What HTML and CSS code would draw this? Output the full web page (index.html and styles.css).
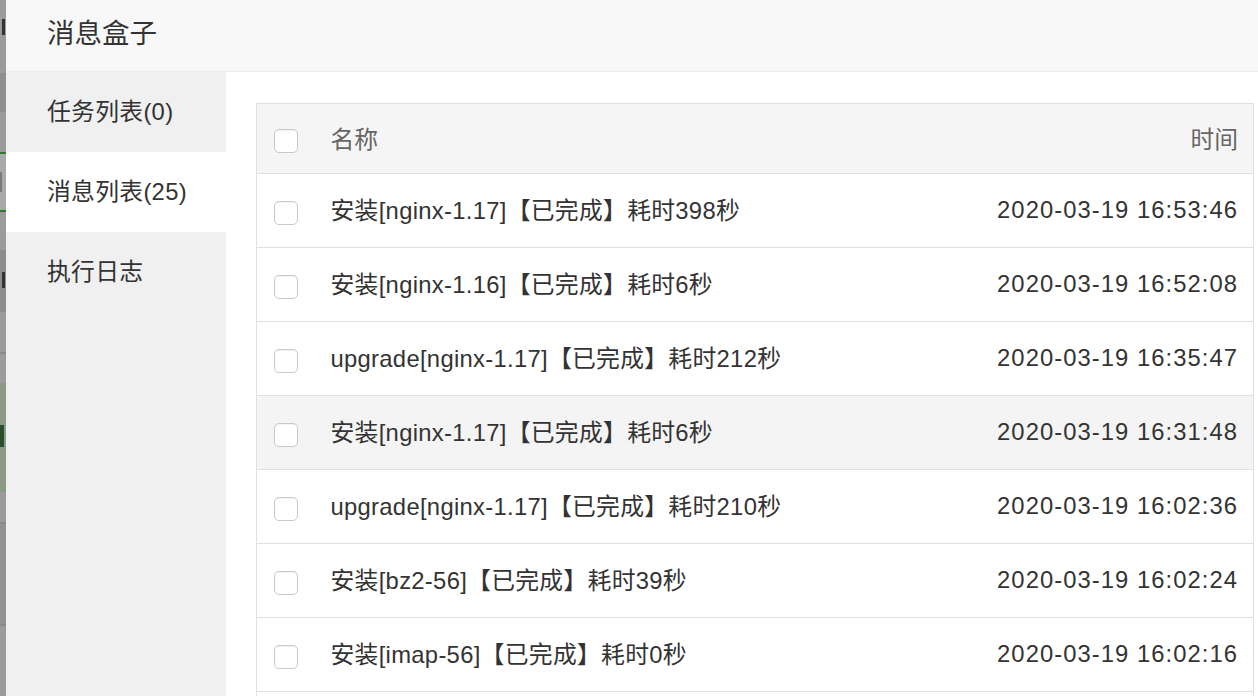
FILE: index.html
```html
<!DOCTYPE html>
<html lang="zh-CN">
<head>
<meta charset="utf-8">
<title>消息盒子</title>
<link rel="stylesheet" href="styles.css">
</head>
<body>
<div class="page">
  <div class="backdrop">
    <div class="bd bd-a"><span class="mark"></span></div>
    <div class="bd bd-b"></div>
    <div class="bd bd-c"></div>
    <div class="bd bd-line"></div>
    <div class="bd bd-d"><span class="mark light"></span></div>
    <div class="bd bd-line"></div>
    <div class="bd bd-e"></div>
    <div class="bd bd-f"><span class="mark"></span></div>
    <div class="bd bd-g"></div>
    <div class="bd bd-sep"></div>
    <div class="bd bd-h"></div>
    <div class="bd bd-green"><span class="mark green"></span></div>
    <div class="bd bd-i"></div>
    <div class="bd bd-sep"></div>
    <div class="bd bd-j"></div>
    <div class="bd bd-sep"></div>
    <div class="bd bd-k"></div>
  </div>
  <div class="modal">
    <div class="modal-header">消息盒子</div>
    <div class="modal-body">
      <ul class="side-menu">
        <li class="menu-item">任务列表(0)</li>
        <li class="menu-item active">消息列表(25)</li>
        <li class="menu-item">执行日志</li>
      </ul>
      <div class="content">
        <table class="msg-table">
          <thead>
            <tr>
              <th class="col-check"><input type="checkbox" class="cb"></th>
              <th class="col-name">名称</th>
              <th class="col-time">时间</th>
            </tr>
          </thead>
          <tbody>
            <tr>
              <td class="col-check"><input type="checkbox" class="cb"></td>
              <td class="col-name">安装[nginx-1.17]【已完成】耗时398秒</td>
              <td class="col-time">2020-03-19 16:53:46</td>
            </tr>
            <tr>
              <td class="col-check"><input type="checkbox" class="cb"></td>
              <td class="col-name">安装[nginx-1.16]【已完成】耗时6秒</td>
              <td class="col-time">2020-03-19 16:52:08</td>
            </tr>
            <tr>
              <td class="col-check"><input type="checkbox" class="cb"></td>
              <td class="col-name">upgrade[nginx-1.17]【已完成】耗时212秒</td>
              <td class="col-time">2020-03-19 16:35:47</td>
            </tr>
            <tr class="hover">
              <td class="col-check"><input type="checkbox" class="cb"></td>
              <td class="col-name">安装[nginx-1.17]【已完成】耗时6秒</td>
              <td class="col-time">2020-03-19 16:31:48</td>
            </tr>
            <tr>
              <td class="col-check"><input type="checkbox" class="cb"></td>
              <td class="col-name">upgrade[nginx-1.17]【已完成】耗时210秒</td>
              <td class="col-time">2020-03-19 16:02:36</td>
            </tr>
            <tr>
              <td class="col-check"><input type="checkbox" class="cb"></td>
              <td class="col-name">安装[bz2-56]【已完成】耗时39秒</td>
              <td class="col-time">2020-03-19 16:02:24</td>
            </tr>
            <tr>
              <td class="col-check"><input type="checkbox" class="cb"></td>
              <td class="col-name">安装[imap-56]【已完成】耗时0秒</td>
              <td class="col-time">2020-03-19 16:02:16</td>
            </tr>
            <tr class="next-row">
              <td class="col-check"></td>
              <td class="col-name"></td>
              <td class="col-time"></td>
            </tr>
          </tbody>
        </table>
      </div>
    </div>
  </div>
</div>
</body>
</html>
```

FILE: styles.css
```css
* {
  box-sizing: border-box;
}

html, body {
  margin: 0;
  padding: 0;
  height: 100%;
  overflow: hidden;
}

body {
  font-family: "Liberation Sans", "Noto Sans CJK SC", sans-serif;
  color: #333;
  background: #999;
}

.page {
  display: flex;
  height: 696px;
  width: 1258px;
  overflow: hidden;
}

/* dimmed page visible at the left edge */
.backdrop {
  width: 6px;
  flex: 0 0 6px;
  display: flex;
  flex-direction: column;
  overflow: hidden;
  background: #999;
}

.bd {
  flex: 0 0 auto;
  overflow: hidden;
}

.mark {
  display: block;
  width: 3px;
  height: 16px;
  margin-left: 2px;
  background: #333;
}

.mark.light {
  background: #7a7a7a;
  width: 2px;
  height: 20px;
  margin-left: 0;
}

.mark.green {
  background: #27502a;
  width: 4px;
  height: 22px;
  margin-left: 0;
}

.bd-a { height: 73px; background: #9b9b9b; padding-top: 19px; }
.bd-b { height: 39px; background: #8f8f8f; }
.bd-c { height: 40px; background: #9b9b9b; }
.bd-line { height: 2px; background: #2f7a2c; }
.bd-d { height: 56px; background: #a9a9a9; padding-top: 18px; }
.bd-e { height: 38px; background: #9b9b9b; }
.bd-f { height: 62px; background: #8d8d8d; padding-top: 22px; }
.bd-g { height: 40px; background: #9b9b9b; }
.bd-sep { height: 2px; background: #8a8a8a; }
.bd-h { height: 29px; background: #9b9b9b; }
.bd-green { height: 109px; background: #8b9a87; padding-top: 42px; }
.bd-i { height: 30px; background: #9b9b9b; }
.bd-j { height: 100px; background: #929292; }
.bd-k { height: 80px; background: #9b9b9b; }

/* modal */
.modal {
  flex: 1 1 auto;
  display: flex;
  flex-direction: column;
  background: #fff;
  min-width: 0;
}

.modal-header {
  height: 72px;
  flex: 0 0 72px;
  display: flex;
  align-items: center;
  padding: 0 0 10px 41px;
  background: #f8f8f8;
  border-bottom: 1px solid #ededed;
  font-size: 27.5px;
  color: #333;
}

.modal-body {
  flex: 1 1 auto;
  display: flex;
  min-height: 0;
}

.side-menu {
  list-style: none;
  margin: 0;
  padding: 0;
  width: 220px;
  flex: 0 0 220px;
  background: #f0f0f0;
}

.menu-item {
  height: 80px;
  display: flex;
  align-items: center;
  padding: 0 0 5px 41px;
  font-size: 23.8px;
  color: #333;
  letter-spacing: 0.3px;
}

.menu-item.active {
  background: #fff;
}

.content {
  flex: 1 1 auto;
  padding: 31px 0 0 30px;
  background: #fff;
  overflow: hidden;
}

.msg-table {
  width: 998px;
  border-collapse: collapse;
  border: 1px solid #e0e0e0;
  font-size: 23.8px;
  table-layout: fixed;
}

.msg-table th,
.msg-table td {
  padding: 0;
  border-bottom: 1px solid #e0e0e0;
  font-weight: normal;
  text-align: left;
  vertical-align: middle;
  white-space: nowrap;
}

.msg-table thead tr {
  height: 70px;
  background: #f5f5f5;
}

.msg-table th {
  color: #666;
}

.msg-table th.col-name,
.msg-table th.col-time {
  padding-bottom: 2px;
}

.msg-table tbody tr {
  height: 74px;
}

.msg-table tbody tr.hover {
  background: #f4f4f4;
}

.col-check {
  width: 74px;
  padding-left: 17px !important;
}

.msg-table td.col-check .cb,
.msg-table th.col-check .cb {
  margin-top: 4px;
}

.msg-table td.col-name {
  color: #333;
  letter-spacing: 0.3px;
  padding-bottom: 4px;
}

.msg-table td.col-time {
  letter-spacing: 1.05px;
  padding-bottom: 1px;
}

.col-time {
  width: 320px;
  text-align: right !important;
  padding-right: 15px !important;
}

.cb {
  -webkit-appearance: none;
  appearance: none;
  display: block;
  width: 24px;
  height: 24px;
  margin: 0;
  border: 1px solid #c9c9c9;
  border-radius: 5px;
  background: #fff;
  box-shadow: inset 0 1px 1px rgba(0, 0, 0, 0.05);
}
```
